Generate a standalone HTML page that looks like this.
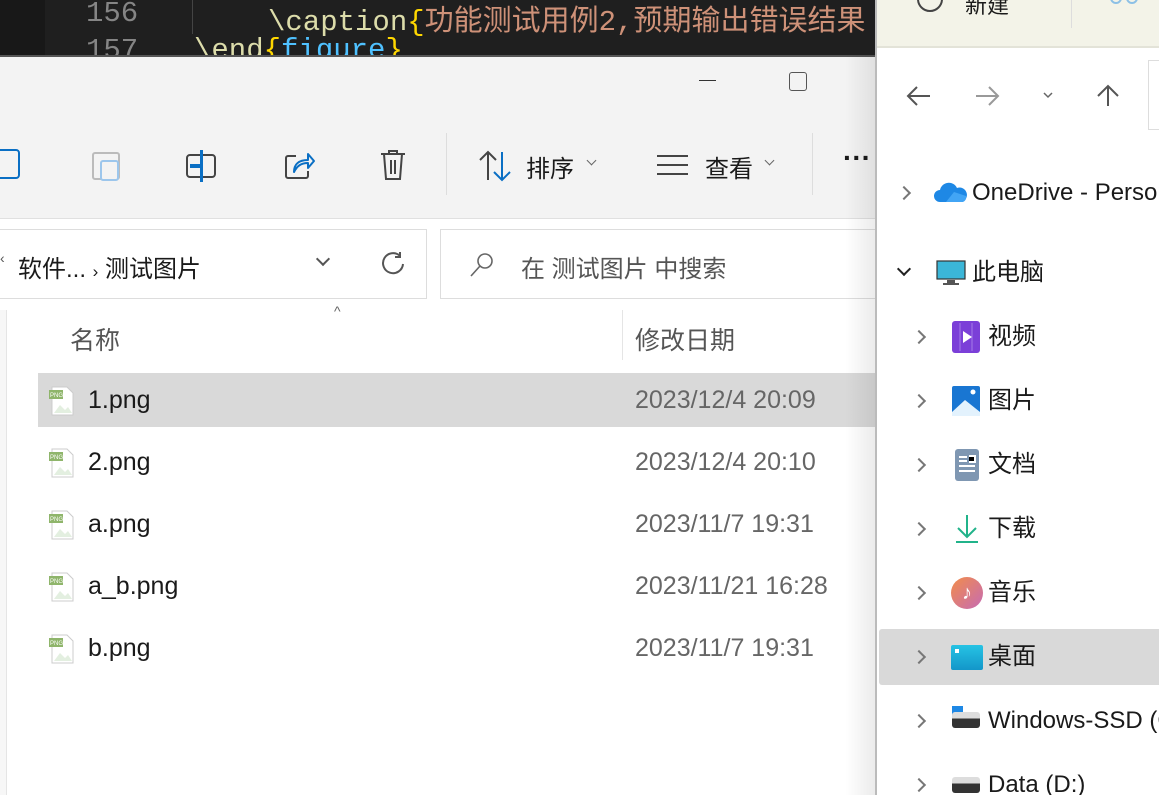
<!DOCTYPE html>
<html><head><meta charset="utf-8"><style>
*{margin:0;padding:0;box-sizing:border-box}
body{width:1159px;height:795px;overflow:hidden;position:relative;background:#fff;font-family:"Liberation Sans","Noto Sans CJK SC",sans-serif;color:#1a1a1a}
.a{position:absolute;white-space:nowrap}
.code{font-family:"Liberation Mono","Noto Sans CJK SC",monospace;font-size:29px;white-space:nowrap;position:absolute}
.row{position:absolute;left:38px;width:837px;height:54px}
.fn{position:absolute;left:88px;font-size:25px;line-height:54px}
.dt{position:absolute;left:635px;font-size:25px;line-height:54px;color:#666;white-space:nowrap}
.nav{position:absolute;font-size:24px;line-height:30px;white-space:nowrap}
.chev{position:absolute;width:10px;height:10px;border-right:2px solid #777;border-top:2px solid #777;transform:rotate(45deg)}
</style></head><body>
<!-- editor -->
<div class="a" style="left:0;top:0;width:880px;height:55px;background:#1f1f1f;overflow:hidden">
<div class="a" style="left:0;top:0;width:45px;height:55px;background:#181818"></div>
<div class="code" style="left:86px;top:-3px;color:#858585">156</div>
<div class="code" style="left:86px;top:34px;color:#858585">157</div>
<div class="a" style="left:192px;top:0;width:1px;height:34px;background:#444"></div>
<div class="code" style="left:268px;top:-3px;color:#dcdcaa">\caption<span style="color:#ffd700">{</span><span style="color:#ce9178">功能测试用例2,预期输出错误结果</span></div>
<div class="code" style="left:194px;top:34px;color:#dcdcaa">\end<span style="color:#ffd700">{</span><span style="color:#4fc1ff">figure</span><span style="color:#ffd700">}</span></div>
</div>
<!-- left window -->
<div class="a" style="left:0;top:55px;width:877px;height:163px;background:#f3f3f3;border-top:2px solid #555"></div>
<div class="a" style="left:0;top:218px;width:877px;height:577px;background:#fff;border-top:1px solid #e0e0e0"></div>
<div class="a" style="left:699px;top:80px;width:17px;height:1px;background:#333"></div>
<div class="a" style="left:789px;top:72px;width:18px;height:19px;border:1.5px solid #555;border-radius:3px"></div>
<!-- toolbar -->
<div class="a" style="left:-4px;top:149px;width:24px;height:30px;border:2px solid #0a6fc4;border-radius:4px"></div>
<div class="a" style="left:92px;top:152px;width:28px;height:28px;border:2px solid #bbb;border-radius:3px"></div>
<div class="a" style="left:100px;top:160px;width:19px;height:21px;border:2px solid #9cc6ec;border-radius:3px;background:#f3f3f3"></div>
<div class="a" style="left:186px;top:154px;width:30px;height:24px;border:2px solid #444;border-radius:4px"></div>
<div class="a" style="left:200px;top:150px;width:3px;height:32px;background:#0a6fc4"></div>
<div class="a" style="left:190px;top:164px;width:10px;height:4px;background:#0a6fc4"></div>
<svg class="a" style="left:282px;top:148px" width="34" height="34" viewBox="0 0 34 34"><path d="M14 8H6a2 2 0 0 0-2 2v18a2 2 0 0 0 2 2h18a2 2 0 0 0 2-2v-5" fill="none" stroke="#444" stroke-width="2"/><path d="M12 24c0-8 5-12 14-12V6l6 7-6 7v-5c-7 0-11 3-14 9z" fill="none" stroke="#0a6fc4" stroke-width="2" stroke-linejoin="round"/></svg>
<svg class="a" style="left:377px;top:148px" width="32" height="34" viewBox="0 0 32 34"><path d="M4 6h24M12 6V3h8v3M7 6l2 25h14l2-25M14 12v14M18 12v14" fill="none" stroke="#444" stroke-width="2"/></svg>
<div class="a" style="left:446px;top:133px;width:1px;height:62px;background:#ddd"></div>
<svg class="a" style="left:478px;top:150px" width="34" height="32" viewBox="0 0 34 32"><path d="M10 30V2M2 10l8-8 8 8" fill="none" stroke="#444" stroke-width="2"/><path d="M24 2v28M16 22l8 8 8-8" fill="none" stroke="#0a6fc4" stroke-width="2"/></svg>
<div class="a" style="left:526px;top:149px;font-size:24px">排序</div>
<div class="a chev" style="left:588px;top:157px;width:7px;height:7px;border-width:1.5px;transform:rotate(135deg);border-color:#666"></div>
<div class="a" style="left:657px;top:155px;width:31px;height:20px;border-top:2px solid #444;border-bottom:2px solid #444"></div>
<div class="a" style="left:657px;top:164px;width:31px;height:2px;background:#444"></div>
<div class="a" style="left:705px;top:149px;font-size:24px">查看</div>
<div class="a chev" style="left:766px;top:157px;width:7px;height:7px;border-width:1.5px;transform:rotate(135deg);border-color:#666"></div>
<div class="a" style="left:812px;top:133px;width:1px;height:62px;background:#ddd"></div>
<div class="a" style="left:843px;top:142px;font-size:28px;font-weight:bold">···</div>
<!-- address -->
<div class="a" style="left:-2px;top:229px;width:429px;height:70px;border:1px solid #ddd;background:#fff"></div>
<div class="a" style="left:0;top:250px;font-size:14px;color:#555">‹</div>
<div class="a" style="left:18px;top:249px;font-size:24px">软件... <span style="font-size:17px">›</span> 测试图片</div>
<div class="a chev" style="left:318px;top:254px;transform:rotate(135deg);border-color:#555"></div>
<svg class="a" style="left:380px;top:250px" width="26" height="26" viewBox="0 0 26 26"><path d="M20 6A10 10 0 1 0 23 14" fill="none" stroke="#555" stroke-width="2"/><path d="M20 2v5h-5" fill="none" stroke="#555" stroke-width="2"/></svg>
<div class="a" style="left:440px;top:229px;width:440px;height:70px;border:1px solid #ddd;background:#fff"></div>
<svg class="a" style="left:468px;top:251px" width="28" height="28" viewBox="0 0 28 28"><circle cx="17" cy="10" r="7" fill="none" stroke="#666" stroke-width="1.6"/><path d="M12 15L3 25" stroke="#666" stroke-width="1.6"/></svg>
<div class="a" style="left:521px;top:249px;font-size:24px;color:#555">在 测试图片 中搜索</div>
<!-- list -->
<div class="a" style="left:0;top:310px;width:7px;height:485px;border-right:1px solid #e5e5e5;background:#f7f7f7"></div>
<div class="a" style="left:334px;top:303px;font-size:14px;color:#666">^</div>
<div class="a" style="left:70px;top:321px;font-size:25px;color:#555">名称</div>
<div class="a" style="left:622px;top:310px;width:1px;height:50px;background:#e5e5e5"></div>
<div class="a" style="left:635px;top:321px;font-size:25px;color:#555">修改日期</div>
<div class="row" style="top:373px;background:#d9d9d9"></div>
<div class="a" style="left:0;top:373px;width:877px;height:340px">
<div class="a" style="left:0;top:0"><div class="a" style="left:48px;top:13px"><svg width="28" height="30" viewBox="0 0 28 30"><path d="M4 1h15l6 6v22H4z" fill="#fff" stroke="#ccc"/><rect x="1" y="4" width="14" height="9" fill="#8fb56b"/><text x="2" y="11" font-size="6" fill="#fff" font-family="Liberation Sans">PNG</text><path d="M6 27l6-8 5 5 3-3 4 6z" fill="#e3efe0"/></svg></div><div class="fn">1.png</div><div class="dt">2023/12/4 20:09</div></div>
<div class="a" style="left:0;top:62px"><div class="a" style="left:48px;top:13px"><svg width="28" height="30" viewBox="0 0 28 30"><path d="M4 1h15l6 6v22H4z" fill="#fff" stroke="#ccc"/><rect x="1" y="4" width="14" height="9" fill="#8fb56b"/><text x="2" y="11" font-size="6" fill="#fff" font-family="Liberation Sans">PNG</text><path d="M6 27l6-8 5 5 3-3 4 6z" fill="#e3efe0"/></svg></div><div class="fn">2.png</div><div class="dt">2023/12/4 20:10</div></div>
<div class="a" style="left:0;top:124px"><div class="a" style="left:48px;top:13px"><svg width="28" height="30" viewBox="0 0 28 30"><path d="M4 1h15l6 6v22H4z" fill="#fff" stroke="#ccc"/><rect x="1" y="4" width="14" height="9" fill="#8fb56b"/><text x="2" y="11" font-size="6" fill="#fff" font-family="Liberation Sans">PNG</text><path d="M6 27l6-8 5 5 3-3 4 6z" fill="#e3efe0"/></svg></div><div class="fn">a.png</div><div class="dt">2023/11/7 19:31</div></div>
<div class="a" style="left:0;top:186px"><div class="a" style="left:48px;top:13px"><svg width="28" height="30" viewBox="0 0 28 30"><path d="M4 1h15l6 6v22H4z" fill="#fff" stroke="#ccc"/><rect x="1" y="4" width="14" height="9" fill="#8fb56b"/><text x="2" y="11" font-size="6" fill="#fff" font-family="Liberation Sans">PNG</text><path d="M6 27l6-8 5 5 3-3 4 6z" fill="#e3efe0"/></svg></div><div class="fn">a_b.png</div><div class="dt">2023/11/21 16:28</div></div>
<div class="a" style="left:0;top:248px"><div class="a" style="left:48px;top:13px"><svg width="28" height="30" viewBox="0 0 28 30"><path d="M4 1h15l6 6v22H4z" fill="#fff" stroke="#ccc"/><rect x="1" y="4" width="14" height="9" fill="#8fb56b"/><text x="2" y="11" font-size="6" fill="#fff" font-family="Liberation Sans">PNG</text><path d="M6 27l6-8 5 5 3-3 4 6z" fill="#e3efe0"/></svg></div><div class="fn">b.png</div><div class="dt">2023/11/7 19:31</div></div>
</div>
<!-- shadow -->
<div class="a" style="left:845px;top:55px;width:30px;height:740px;background:linear-gradient(90deg,rgba(0,0,0,0),rgba(0,0,0,0.08))"></div>
<!-- right window -->
<div class="a" style="left:875px;top:0;width:284px;height:795px;background:#fff;border-left:2px solid #bbb;overflow:hidden">
<div class="a" style="left:0;top:0;width:284px;height:48px;background:#f3f3e8;border-bottom:2px solid #e3e3d8"></div>
<div class="a" style="left:40px;top:-14px;width:26px;height:26px;border:2px solid #444;border-radius:50%"></div>
<div class="a" style="left:88px;top:-12px;font-size:22px">新建</div>
<div class="a" style="left:194px;top:0;width:1px;height:28px;background:#ddd"></div>
<div class="a" style="left:233px;top:-8px;width:12px;height:12px;border:2px solid #8cc0e6;border-radius:50%"></div>
<div class="a" style="left:249px;top:-8px;width:12px;height:12px;border:2px solid #8cc0e6;border-radius:50%"></div>
<svg class="a" style="left:28px;top:84px" width="220" height="24" viewBox="0 0 220 24"><path d="M3 12h22M12 3l-9 9 9 9" fill="none" stroke="#555" stroke-width="2"/><path d="M71 12h22M84 3l9 9-9 9" fill="none" stroke="#999" stroke-width="2"/><path d="M139 9l4 4 4-4" fill="none" stroke="#666" stroke-width="1.5"/><path d="M203 22V2M193 12l10-10 10 10" fill="none" stroke="#555" stroke-width="2"/></svg>
<div class="a" style="left:271px;top:60px;width:20px;height:70px;border:1px solid #ddd"></div>
<div class="a" style="left:2px;top:629px;width:284px;height:56px;background:#d9d9d9;border-radius:3px"></div>
<div class="chev a" style="left:22px;top:188px"></div>
<svg class="a" style="left:57px;top:181px" width="34" height="22" viewBox="0 0 34 22"><path d="M6 21a6 6 0 0 1 0-12 9 9 0 0 1 17-2 7 7 0 0 1 5 14z" fill="#1e88e5"/><path d="M12 21l8-10 12 4a5 5 0 0 1-3 6z" fill="#42a5f5"/></svg>
<div class="nav" style="left:95px;top:178px">OneDrive - Personal</div>
<div class="chev a" style="left:22px;top:264px;transform:rotate(135deg);border-color:#222"></div>
<svg class="a" style="left:59px;top:260px" width="30" height="26" viewBox="0 0 30 26"><rect x="1" y="1" width="28" height="18" fill="#3bb6d8" stroke="#333" stroke-width="1.2"/><rect x="11" y="20" width="8" height="3" fill="#555"/><rect x="7" y="23" width="16" height="2" fill="#555"/></svg>
<div class="nav" style="left:95px;top:258px">此电脑</div>
<div class="chev a" style="left:37px;top:332px"></div>
<svg class="a" style="left:75px;top:321px" width="28" height="32" viewBox="0 0 28 32"><rect x="0" y="0" width="28" height="32" rx="3" fill="#7b3fd8"/><path d="M8 2v28M20 2v28" stroke="#a57be8" stroke-width="1"/><path d="M11 10l9 6-9 6z" fill="#fff"/></svg>
<div class="nav" style="left:111px;top:322px">视频</div>
<div class="chev a" style="left:37px;top:396px"></div>
<svg class="a" style="left:75px;top:386px" width="28" height="30" viewBox="0 0 28 30"><rect width="28" height="30" rx="2" fill="#1976d2"/><path d="M0 26l13-12 15 12v4H0z" fill="#e3f2fd"/><circle cx="21" cy="6" r="2.5" fill="#fff"/></svg>
<div class="nav" style="left:111px;top:386px">图片</div>
<div class="chev a" style="left:37px;top:460px"></div>
<svg class="a" style="left:78px;top:449px" width="24" height="32" viewBox="0 0 24 32"><rect width="24" height="32" rx="3" fill="#7f97b2"/><path d="M4 8h8M4 12h8M14 7h6v6h-6M4 17h16M4 22h16" stroke="#fff" stroke-width="2"/></svg>
<div class="nav" style="left:111px;top:450px">文档</div>
<div class="chev a" style="left:37px;top:524px"></div>
<svg class="a" style="left:78px;top:514px" width="24" height="30" viewBox="0 0 24 30"><path d="M12 1v21M3 14l9 9 9-9" fill="none" stroke="#21b38a" stroke-width="2"/><path d="M1 28h22" stroke="#21b38a" stroke-width="2"/></svg>
<div class="nav" style="left:111px;top:514px">下载</div>
<div class="chev a" style="left:37px;top:588px"></div>
<div class="a" style="left:74px;top:577px;width:32px;height:32px;border-radius:50%;background:linear-gradient(135deg,#f28d4a,#c66bb4);color:#fff;font-size:20px;text-align:center;line-height:32px">♪</div>
<div class="nav" style="left:111px;top:578px">音乐</div>
<div class="chev a" style="left:37px;top:652px"></div>
<div class="a" style="left:74px;top:645px;width:32px;height:25px;background:linear-gradient(180deg,#26c3e4,#1396c9);border-radius:2px"></div>
<div class="a" style="left:78px;top:649px;width:4px;height:4px;background:#fff"></div>
<div class="nav" style="left:111px;top:642px">桌面</div>
<div class="chev a" style="left:37px;top:716px"></div>
<div class="a" style="left:75px;top:706px;width:11px;height:11px;background:#1e88e5"></div>
<div class="a" style="left:75px;top:712px;width:28px;height:16px;background:linear-gradient(#ddd 40%,#333 40%);border-radius:3px"></div>
<div class="nav" style="left:111px;top:706px">Windows-SSD (C:)</div>
<div class="chev a" style="left:37px;top:780px"></div>
<div class="a" style="left:75px;top:777px;width:28px;height:16px;background:linear-gradient(#ddd 40%,#333 40%);border-radius:3px"></div>
<div class="nav" style="left:111px;top:770px">Data (D:)</div>
</div>
</body></html>
